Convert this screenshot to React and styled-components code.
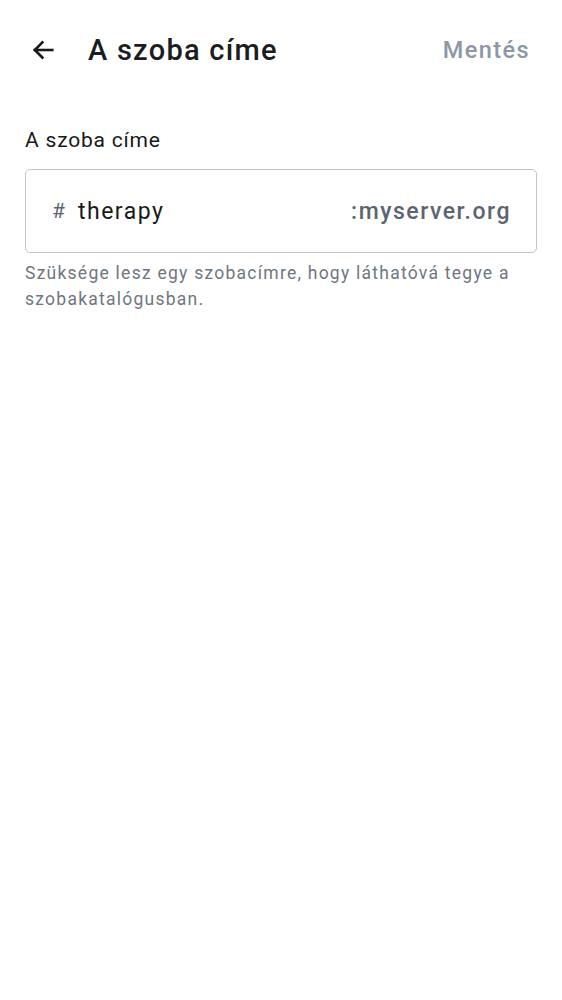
import React from 'react'
import styled, { createGlobalStyle } from 'styled-components'

const Global = createGlobalStyle`
  body {
    margin: 0;
    background: #fff;
    font-family: Roboto, "Noto Sans", sans-serif;
  }
`

const App = () => {
  return (
    <Page>
      <Global />
      <Header>
        <BackButton aria-label='back'>
          <svg width='28' height='28' viewBox='0 0 24 24' fill='none' stroke='#17191c' strokeWidth='2.2' strokeLinecap='square'>
            <path d='M20 12H5' />
            <path d='M11.5 5.5L5 12l6.5 6.5' />
          </svg>
        </BackButton>
        <Title>A szoba címe</Title>
        <SaveButton>Mentés</SaveButton>
      </Header>

      <Content>
        <Label>A szoba címe</Label>
        <Field>
          <Hash>#</Hash>
          <Value>therapy</Value>
          <Server>:myserver.org</Server>
        </Field>
        <Help>Szüksége lesz egy szobacímre, hogy láthatóvá tegye a szobakatalógusban.</Help>
      </Content>
    </Page>
  )
}

const Page = styled.div`
  width: 562px;
  min-height: 1000px;
  background: #fff;
`

const Header = styled.div`
  height: 100px;
  display: flex;
  align-items: center;
  padding: 0 32px 0 29px;
  box-sizing: border-box;
`

const BackButton = styled.div`
  width: 28px;
  height: 28px;
  display: flex;
  margin-right: 31px;
`

const Title = styled.h1`
  flex: 1;
  margin: 0;
  font-size: 29px;
  font-weight: 500;
  letter-spacing: 1.25px;
  color: #1b1d21;
`

const SaveButton = styled.div`
  font-size: 23.5px;
  font-weight: 500;
  letter-spacing: 1.4px;
  color: #8d97a5;
`

const Content = styled.div`
  padding: 28px 25px 0;
`

const Label = styled.div`
  font-size: 21px;
  letter-spacing: 0.8px;
  color: #17191c;
  margin-bottom: 17px;
`

const Field = styled.div`
  height: 84px;
  box-sizing: border-box;
  border: 1px solid #c1c6cd;
  border-radius: 5px;
  display: flex;
  align-items: center;
  padding: 0 25px 0 26px;
`

const Hash = styled.span`
  font-size: 21px;
  color: #5c6470;
  margin-right: 13px;
`

const Value = styled.span`
  flex: 1;
  font-size: 23px;
  letter-spacing: 1.5px;
  color: #17191c;
`

const Server = styled.span`
  font-size: 23px;
  font-weight: 500;
  letter-spacing: 1.5px;
  color: #5c6470;
`

const Help = styled.p`
  margin: 7px 0 0;
  font-size: 17.5px;
  line-height: 26px;
  letter-spacing: 1.25px;
  color: #6f7680;
`

export default App
